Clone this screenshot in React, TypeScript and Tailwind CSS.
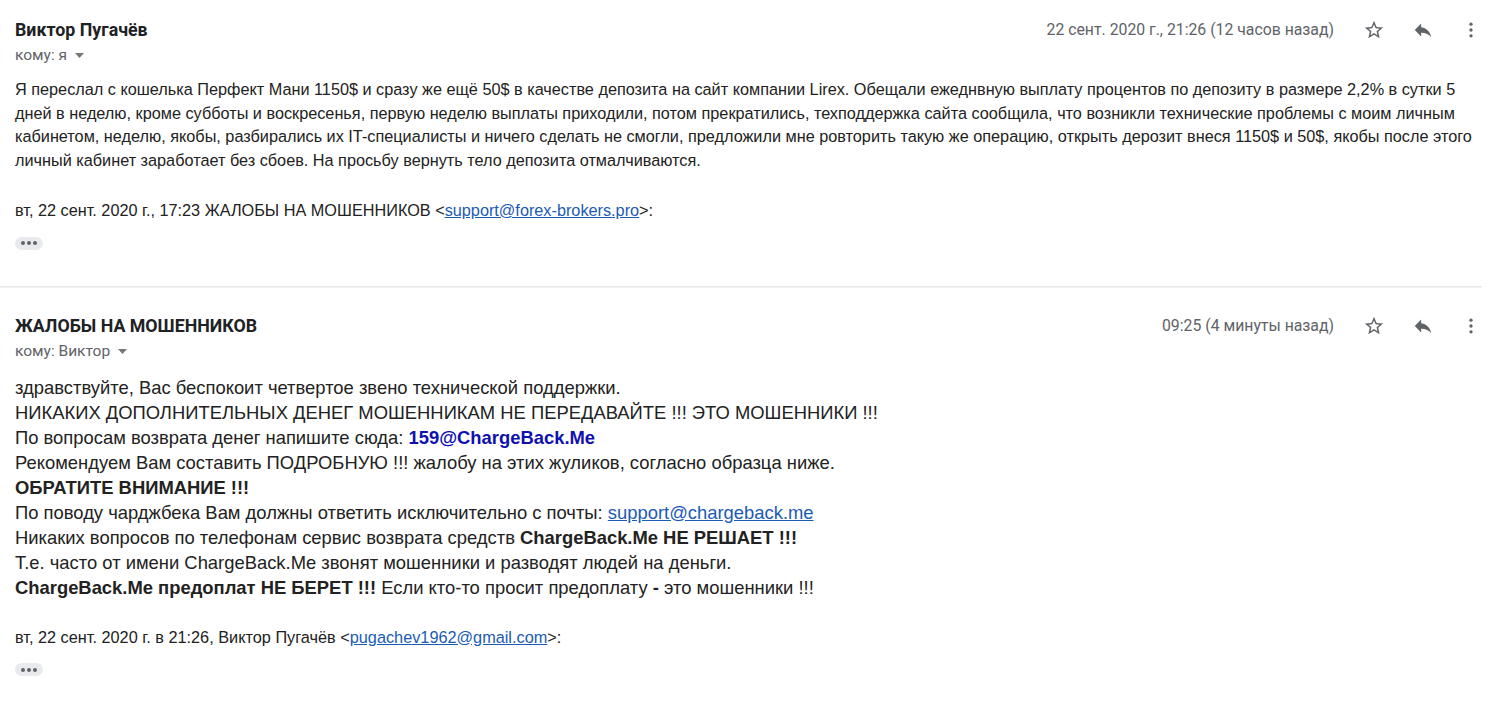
import React from 'react';

const StarIcon = () => (
  <svg width="22" height="22" viewBox="0 0 24 24" fill="#5f6368">
    <path d="M22 9.24l-7.19-.62L12 2 9.19 8.63 2 9.24l5.46 4.73L5.82 21 12 17.27 18.18 21l-1.63-7.03L22 9.24zM12 15.4l-3.76 2.27 1-4.28-3.32-2.88 4.38-.38L12 6.1l1.71 4.04 4.38.38-3.32 2.88 1 4.28L12 15.4z" />
  </svg>
);

const ReplyIcon = () => (
  <svg width="22" height="22" viewBox="0 0 24 24" fill="#5f6368">
    <path d="M10 9V5l-7 7 7 7v-4.1c5 0 8.5 1.6 11 5.1-1-5-4-10-11-11z" />
  </svg>
);

const MoreIcon = () => (
  <svg width="20" height="20" viewBox="0 0 24 24" fill="#5f6368">
    <circle cx="12" cy="5" r="2" />
    <circle cx="12" cy="12" r="2" />
    <circle cx="12" cy="19" r="2" />
  </svg>
);

const Caret = () => (
  <svg width="9" height="5" viewBox="0 0 9 5" className="ml-2 mt-[1px]">
    <path d="M0 0h9L4.5 5z" fill="#777" />
  </svg>
);

const Ellipsis = () => (
  <div className="mt-[14px] h-[13px] w-[28px] rounded-full bg-[#e8eaed] flex items-center justify-center gap-[2px]">
    <span className="w-[4px] h-[4px] rounded-full bg-[#5f6368]" />
    <span className="w-[4px] h-[4px] rounded-full bg-[#5f6368]" />
    <span className="w-[4px] h-[4px] rounded-full bg-[#5f6368]" />
  </div>
);

type HeaderProps = { name: string; to: string; date: string };

const MessageHeader: React.FC<HeaderProps> = ({ name, to, date }) => (
  <div className="flex items-start justify-between">
    <div>
      <div className="text-[17.8px] leading-5 font-bold text-[#202124]">{name}</div>
      <div className="flex items-center text-[15.5px] leading-5 text-[#5f6368] mt-[5px]">
        кому: {to}
        <Caret />
      </div>
    </div>
    <div className="flex items-center h-5">
      <span className="text-[15.8px] text-[#5f6368] mr-[29px]">{date}</span>
      <div className="flex items-center gap-[27px] pr-[21px]">
        <StarIcon />
        <ReplyIcon />
        <MoreIcon />
      </div>
    </div>
  </div>
);

const linkCls = 'text-[#1a5bb5] underline';

export default function App() {
  return (
    <div className="w-[1502px] h-[707px] bg-white overflow-hidden font-['Roboto',sans-serif]">
      {/* first message */}
      <div className="pl-[15px] pt-5 pb-[36px]">
        <MessageHeader name="Виктор Пугачёв" to="я" date="22 сент. 2020 г., 21:26 (12 часов назад)" />
        <div className="font-['Liberation_Sans',Arial,sans-serif] text-[16.25px] leading-[23.5px] text-[#222] mt-[13px]">
          <p className="whitespace-nowrap">
            Я переслал с кошелька Перфект Мани 1150$ и сразу же ещё 50$ в качестве депозита на сайт компании Lirex. Обещали ежеднвную выплату процентов по депозиту в размере 2,2% в сутки 5
            <br />
            дней в неделю, кроме субботы и воскресенья, первую неделю выплаты приходили, потом прекратились, техподдержка сайта сообщила, что возникли технические проблемы с моим личным
            <br />
            кабинетом, неделю, якобы, разбирались их IT-специалисты и ничего сделать не смогли, предложили мне ровторить такую же операцию, открыть дерозит внеся 1150$ и 50$, якобы после этого
            <br />
            личный кабинет заработает без сбоев. На просьбу вернуть тело депозита отмалчиваются.
          </p>
          <p className="mt-[27px]">
            вт, 22 сент. 2020 г., 17:23 ЖАЛОБЫ НА МОШЕННИКОВ &lt;<a className={linkCls}>support@forex-brokers.pro</a>&gt;:
          </p>
          <Ellipsis />
        </div>
      </div>

      <div className="mr-[20px] h-px bg-[#e6e6e6] shadow-[0_1px_1px_rgba(0,0,0,0.06)]" />

      {/* second message */}
      <div className="pl-[15px] pt-[29px]">
        <MessageHeader name="ЖАЛОБЫ НА МОШЕННИКОВ" to="Виктор" date="09:25 (4 минуты назад)" />
        <div className="font-['Liberation_Sans',Arial,sans-serif] text-[18.4px] leading-[25px] text-[#222] mt-[14px]">
          <div>здравствуйте, Вас беспокоит четвертое звено технической поддержки.</div>
          <div>НИКАКИХ ДОПОЛНИТЕЛЬНЫХ ДЕНЕГ МОШЕННИКАМ НЕ ПЕРЕДАВАЙТЕ !!! ЭТО МОШЕННИКИ !!!</div>
          <div>
            По вопросам возврата денег напишите сюда: <b className="text-[#1010b0]">159@ChargeBack.Me</b>
          </div>
          <div>Рекомендуем Вам составить ПОДРОБНУЮ !!! жалобу на этих жуликов, согласно образца ниже.</div>
          <div className="font-bold">ОБРАТИТЕ ВНИМАНИЕ !!!</div>
          <div>
            По поводу чарджбека Вам должны ответить исключительно с почты: <a className={linkCls}>support@chargeback.me</a>
          </div>
          <div>
            Никаких вопросов по телефонам сервис возврата средств <b>ChargeBack.Me НЕ РЕШАЕТ !!!</b>
          </div>
          <div>Т.е. часто от имени ChargeBack.Me звонят мошенники и разводят людей на деньги.</div>
          <div>
            <b>ChargeBack.Me предоплат НЕ БЕРЕТ !!!</b> Если кто-то просит предоплату <b>-</b> это мошенники !!!
          </div>
          <div className="text-[16.3px] leading-[23.5px] mt-[26px]">
            вт, 22 сент. 2020 г. в 21:26, Виктор Пугачёв &lt;<a className={linkCls}>pugachev1962@gmail.com</a>&gt;:
          </div>
          <Ellipsis />
        </div>
      </div>
    </div>
  );
}
